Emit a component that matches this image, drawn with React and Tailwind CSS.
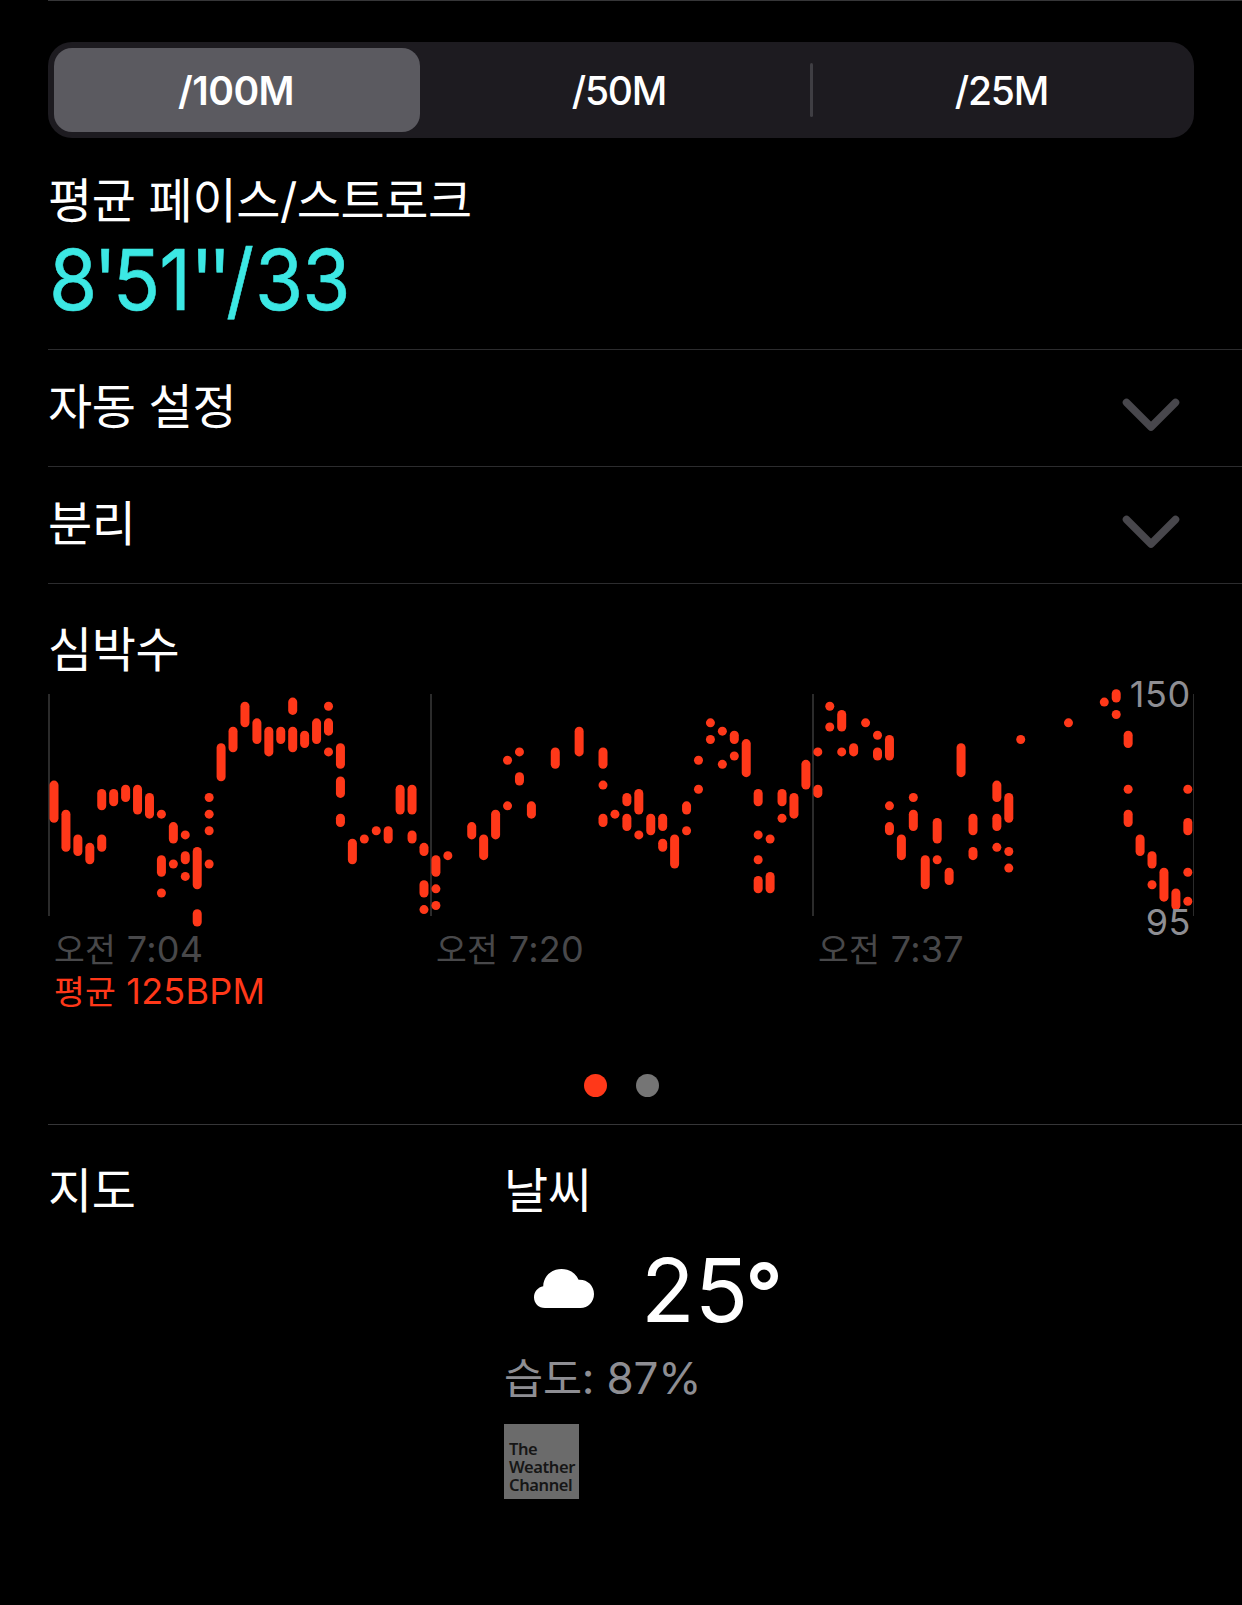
import React, { useState } from 'react';

const paceOptions = ['/100M', '/50M', '/25M'];

const timeLabels = ['7:04', '7:20', '7:37'];

// Each slot holds [highest, lowest] BPM ranges, [slot, ranges]
const heartRate = [
  [0, [[128, 120]]],
  [1, [[121, 113]]],
  [2, [[115, 112]]],
  [3, [[113, 110]]],
  [4, [[126, 123], [115, 113]]],
  [5, [[126, 124]]],
  [6, [[127, 125]]],
  [7, [[127, 122]]],
  [8, [[125, 121]]],
  [9, [[121, 121], [110, 107], [102, 102]]],
  [10, [[118, 115], [109, 109]]],
  [11, [[116, 116], [111, 110], [106, 106]]],
  [12, [[112, 104], [97, 95]]],
  [13, [[125, 125], [121, 121], [117, 117], [109, 109]]],
  [14, [[137, 130]]],
  [15, [[141, 137]]],
  [16, [[147, 143]]],
  [17, [[143, 139]]],
  [18, [[141, 136]]],
  [19, [[141, 139]]],
  [20, [[148, 146], [141, 137]]],
  [21, [[140, 138]]],
  [22, [[143, 139]]],
  [23, [[147, 147], [143, 141], [136, 136]]],
  [24, [[137, 133], [129, 126], [120, 119]]],
  [25, [[114, 110]]],
  [26, [[115, 115]]],
  [27, [[117, 117]]],
  [28, [[117, 115]]],
  [29, [[127, 122]]],
  [30, [[127, 122], [116, 115]]],
  [31, [[113, 112], [104, 102], [98, 98]]],
  [32, [[110, 107], [103, 103], [99, 99]]],
  [33, [[111, 111]]],
  [35, [[118, 116]]],
  [36, [[115, 111]]],
  [37, [[121, 116]]],
  [38, [[134, 134], [123, 123]]],
  [39, [[136, 136], [130, 129]]],
  [40, [[123, 121]]],
  [42, [[136, 133]]],
  [44, [[141, 136]]],
  [46, [[136, 133], [128, 128], [120, 119]]],
  [47, [[121, 121]]],
  [48, [[125, 124], [120, 118]]],
  [49, [[126, 122], [116, 116]]],
  [50, [[120, 117]]],
  [51, [[120, 118], [114, 113]]],
  [52, [[115, 109]]],
  [53, [[123, 122], [117, 117]]],
  [54, [[134, 134], [127, 127]]],
  [55, [[143, 143], [139, 139]]],
  [56, [[141, 141], [133, 133]]],
  [57, [[140, 139], [135, 135]]],
  [58, [[138, 131]]],
  [59, [[126, 124], [116, 116], [110, 110], [105, 103]]],
  [60, [[115, 115], [106, 103]]],
  [61, [[126, 124], [120, 120]]],
  [62, [[125, 121]]],
  [63, [[133, 128]]],
  [64, [[136, 136], [127, 126]]],
  [65, [[147, 147], [142, 142]]],
  [66, [[145, 142], [136, 136]]],
  [67, [[137, 136]]],
  [68, [[143, 143]]],
  [69, [[140, 140], [136, 135]]],
  [70, [[139, 135], [123, 123], [118, 117]]],
  [71, [[115, 111]]],
  [72, [[125, 125], [121, 118]]],
  [73, [[110, 104]]],
  [74, [[119, 115], [110, 110]]],
  [75, [[107, 105]]],
  [76, [[137, 131]]],
  [77, [[120, 117], [112, 111]]],
  [79, [[128, 125], [120, 118], [113, 113]]],
  [80, [[125, 120], [112, 112], [108, 108]]],
  [81, [[139, 139]]],
  [85, [[143, 143]]],
  [88, [[148, 148]]],
  [89, [[150, 149], [145, 145]]],
  [90, [[140, 138], [127, 127], [121, 119]]],
  [91, [[115, 112]]],
  [92, [[111, 109], [104, 104]]],
  [93, [[107, 101]]],
  [94, [[102, 99]]],
  [95, [[127, 127], [119, 117], [107, 107], [100, 100]]],
];

const SLOT = 11.935;
const BAR = 9;
const toY = (bpm) => (150 - bpm) * 4.15 - 0.2;

const Heading = ({ children }) => (
  <h2 className="text-[48px] leading-[56px] tracking-[-0.4px] font-normal">{children}</h2>
);

const CollapsedRow = ({ title }) => (
  <button className="flex h-[117px] w-full items-start justify-between border-t border-[#2c2c2e] pt-[29px] pr-[62px] text-left">
    <Heading>{title}</Heading>
    <svg className="mt-4" width="58" height="42" viewBox="0 0 58 42" fill="none">
      <path
        d="M4.5 7.5L29 32L53.5 7.5"
        stroke="#48474c"
        strokeWidth="7.5"
        strokeLinecap="round"
        strokeLinejoin="round"
      />
    </svg>
  </button>
);

const HeartRateChart = () => (
  <div className="relative h-[222px] w-[1146px]">
    <svg className="block overflow-visible" width="1146" height="222" viewBox="0 0 1146 222">
      <rect x="0" y="0" width="2" height="222" fill="#2b2b2b" />
      <rect x="382" y="0" width="2" height="222" fill="#2b2b2b" />
      <rect x="764" y="0" width="2" height="222" fill="#2b2b2b" />
      <rect x="1145" y="0" width="1" height="222" fill="#2b2b2b" />
      {heartRate.map(([slot, ranges]) =>
        ranges.map(([high, low]) => (
          <rect
            key={`${slot}-${high}`}
            x={slot * SLOT + 6 - BAR / 2}
            y={toY(high) - BAR / 2}
            width={BAR}
            height={toY(low) - toY(high) + BAR}
            rx={BAR / 2}
            fill="#ff3819"
          />
        ))
      )}
    </svg>
    <span className="absolute top-[-22px] right-[3px] text-[36px] leading-[44px] tracking-[0.7px] text-[#8e8e93]">
      150
    </span>
    <span className="absolute top-[206px] right-[3px] text-[36px] leading-[44px] tracking-[0.5px] text-[#8e8e93]">
      95
    </span>
  </div>
);

const App = () => {
  const [selected, setSelected] = useState(0);

  return (
    <div className="h-[1605px] w-[1242px] overflow-hidden bg-black pl-12 font-['Inter','Noto_Sans_CJK_KR',sans-serif] text-white">
      {/* Pace */}
      <section className="h-[349px] border-t border-[#363638] pt-[41px]">
        <div className="grid h-24 w-[1146px] grid-cols-[366px_390px_3px_375px] items-center rounded-[24px] bg-[#1d1b20] p-1.5">
          {paceOptions.map((option, index) => (
            <React.Fragment key={option}>
              {index === 2 && <span className="h-[54px] rounded-full bg-[#3f3e43]" />}
              <button
                onClick={() => setSelected(index)}
                className={
                  selected === index
                    ? 'h-[84px] rounded-[18px] bg-[#5b5a60] pt-0.5 pr-0.5 text-[39px] font-semibold tracking-[-0.5px]'
                    : index === 1
                      ? 'h-[84px] pt-0.5 pl-2 text-[39px] font-medium tracking-[-1.2px]'
                      : 'h-[84px] pt-0.5 pl-0.5 text-[39px] font-medium tracking-[-1.2px]'
                }
              >
                {option}
              </button>
            </React.Fragment>
          ))}
        </div>
        <div className="mt-[35px]">
          <Heading>평균 페이스/스트로크</Heading>
        </div>
        <p className="mt-px w-fit origin-left scale-x-[0.93] pl-px text-[84px] leading-[100px] font-normal tracking-[-1px] text-[#3ce8e4] [-webkit-text-stroke:0.6px_#3ce8e4]">
          8<span className="-ml-[3px] tracking-[-4.5px]">'</span>51
          <span className="tracking-[-6px]">''</span>
          <span className="tracking-[1px]">/</span>33
        </p>
      </section>

      <CollapsedRow title="자동 설정" />
      <CollapsedRow title="분리" />

      {/* Heart rate */}
      <section className="h-[541px] border-t border-[#2c2c2e] pt-[38px]">
        <Heading>심박수</Heading>
        <div className="mt-4">
          <HeartRateChart />
        </div>
        <div className="mt-[12px] flex text-[36px] leading-[42px] tracking-[0.3px] text-[#48484a]">
          {timeLabels.map((label) => (
            <span key={label} className="h-[42px] w-[382px] pl-1.5">
              <span className="text-[33.5px]">오전</span> {label}
            </span>
          ))}
        </div>
        <p className="h-[42px] pl-1.5 text-[36px] leading-[42px] tracking-[0.2px] text-[#ff3819]">
          <span className="text-[33.5px]">평균</span> 125BPM
        </p>
        <div className="mt-[62px] flex gap-[29px] pl-[536px]">
          <span className="size-[23px] rounded-full bg-[#ff3819]" />
          <span className="size-[23px] rounded-full bg-[#757575]" />
        </div>
      </section>

      {/* Map and weather */}
      <section className="flex border-t border-[#363638] pt-[38px]">
        <div className="w-[456px]">
          <Heading>지도</Heading>
        </div>
        <div>
          <Heading>날씨</Heading>
          <div className="mt-5 flex h-[104px] items-center pl-[30px]">
            <svg className="-mt-1.5" width="60" height="39" viewBox="0 0 60 39" fill="#fff">
              <path d="M11 39C4.500 39 0 34.500 0 28.300C0 22.500 4 18.200 9.200 17.200C9.600 7.200 17.200 0 27.500 0C35.500 0 41.800 4.200 44.600 10.800C53.500 10.300 60 16.700 60 25C60 33 54 39 46.500 39Z" />
            </svg>
            <span className="ml-[47px] text-[88px] leading-[104px]">
              25<span className="-ml-[3px] text-[82px] font-semibold">°</span>
            </span>
          </div>
          <p className="mt-2 h-[54px] text-[44px] leading-[54px] tracking-[-0.2px] text-[#8e8e93]">
            <span className="text-[42.5px]">습도</span>: 87%
          </p>
          <div className="mt-[19px] flex size-[75px] flex-col justify-end bg-[#6b6b6b] pb-[5px] pl-[5px] font-['Noto_Sans',sans-serif] text-[16.5px] leading-[18px] font-semibold tracking-[-0.4px] text-[#161616]">
            <span>The</span>
            <span>Weather</span>
            <span>Channel</span>
          </div>
        </div>
      </section>
    </div>
  );
};

export default App;
